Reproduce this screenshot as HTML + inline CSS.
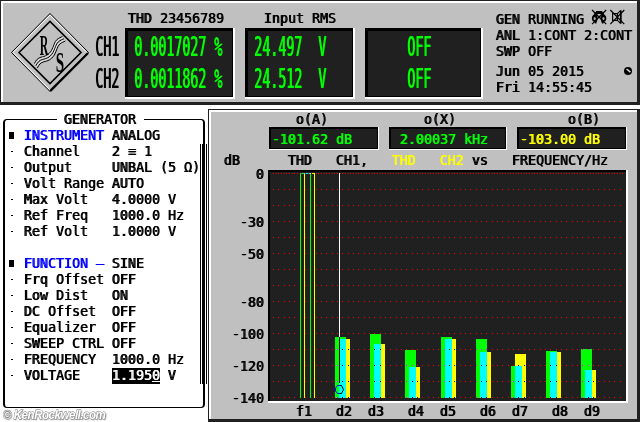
<!DOCTYPE html>
<html lang="en"><head><meta charset="utf-8"><title>UPL Audio Analyzer</title>
<style>
html,body{margin:0;padding:0;background:#fff;}
body{width:640px;height:422px;position:relative;overflow:hidden;}
div,span{box-sizing:border-box;}
.a{position:absolute;}
.t{position:absolute;white-space:pre;font-family:"DejaVu Sans Mono","Liberation Mono",monospace;font-weight:normal;font-size:13.3px;line-height:16px;height:16px;color:#000;letter-spacing:0;text-shadow:0.8px 0 0;margin-left:-0.4px;}
.b{color:#0000ff;}
.g{color:#00ff00;}
.y{color:#ffff00;}
.big{position:absolute;white-space:pre;font-family:"DejaVu Sans Mono","Liberation Mono",monospace;font-weight:normal;font-size:13.3px;line-height:16px;height:16px;color:#00ff00;transform-origin:0 0;transform:scaleY(2);text-shadow:0.8px 0 0;}
.bigk{color:#000;}
.thin{text-shadow:0.4px 0 0;}
.dash{position:absolute;width:2px;height:1px;background:#000;left:11px;}
.bul{position:absolute;width:5px;height:7px;background:#000;left:9px;}
</style></head><body>
<div id="screen" style="position:absolute;left:0;top:0;width:640px;height:422px;overflow:hidden;will-change:transform">

<!-- top status panel -->
<div class="a" style="left:0px;top:0px;width:640px;height:105px;background:#202020"></div>
<div class="a" style="left:1px;top:1px;width:636px;height:101px;background:#fff"></div>
<div class="a" style="left:3px;top:3px;width:634px;height:99px;background:#c0c0c0"></div>
<div class="a" style="left:125px;top:28px;width:110px;height:71px;background:#fff"></div>
<div class="a" style="left:125px;top:28px;width:108px;height:69px;background:#000"></div>
<div class="a" style="left:128px;top:31px;width:104px;height:65px;background:#202020"></div>
<div class="a" style="left:245px;top:28px;width:110px;height:71px;background:#fff"></div>
<div class="a" style="left:245px;top:28px;width:108px;height:69px;background:#000"></div>
<div class="a" style="left:248px;top:31px;width:104px;height:65px;background:#202020"></div>
<div class="a" style="left:365px;top:28px;width:118px;height:71px;background:#fff"></div>
<div class="a" style="left:365px;top:28px;width:116px;height:69px;background:#000"></div>
<div class="a" style="left:368px;top:31px;width:112px;height:65px;background:#202020"></div>
<div class="t" style="left:128px;top:11px;">THD 23456789</div>
<div class="t" style="left:264px;top:11px;">Input RMS</div>
<div class="t" style="left:496px;top:12px;">GEN RUNNING</div>
<div class="t" style="left:496px;top:28px;">ANL 1:CONT 2:CONT</div>
<div class="t" style="left:496px;top:44px;">SWP OFF</div>
<div class="t" style="left:496px;top:64px;">Jun 05 2015</div>
<div class="t" style="left:496px;top:80px;">Fri 14:55:45</div>
<div class="big bigk" style="left:95px;top:32px">CH1</div>
<div class="big bigk" style="left:95px;top:64px">CH2</div>
<div class="big " style="left:134px;top:32px">0.0017027 %</div>
<div class="big " style="left:134px;top:64px">0.0011862 %</div>
<div class="big " style="left:254px;top:32px">24.497  V</div>
<div class="big " style="left:254px;top:64px">24.512  V</div>
<div class="big " style="left:407px;top:32px">OFF</div>
<div class="big " style="left:407px;top:64px">OFF</div>
<svg class="a" style="left:5px;top:8px" width="90" height="90" viewBox="5 8 90 90">
<polygon points="11.5,52.5 50,13.5 88.5,52.5 50,91.5" fill="#c0c0c0" stroke="#000" stroke-width="1"/>
<polygon points="13,52.5 50,15 87,52.5 50,90" fill="none" stroke="#fff" stroke-width="1"/>
<polyline points="88,53 50.3,90.8" fill="none" stroke="#000" stroke-width="2.4"/>
<polygon points="19,52.5 50,21.5 81,52.5 50,83.5" fill="#c0c0c0" stroke="#000" stroke-width="1.6"/>
<g fill="none" stroke-width="1">
<path transform="translate(0.0,0.00)" d="M34.5,63.5 C36,60 38,58 41,57.2 C45,56.3 48,55.5 51.5,50.5 C54,46 54.5,41.5 57,39.5 C59,37.8 61,37.2 62.5,36.5" stroke="#000"/>
<path transform="translate(0.7,1.15)" d="M34.5,63.5 C36,60 38,58 41,57.2 C45,56.3 48,55.5 51.5,50.5 C54,46 54.5,41.5 57,39.5 C59,37.8 61,37.2 62.5,36.5" stroke="#e8e8e8"/>
<path transform="translate(1.4,2.30)" d="M34.5,63.5 C36,60 38,58 41,57.2 C45,56.3 48,55.5 51.5,50.5 C54,46 54.5,41.5 57,39.5 C59,37.8 61,37.2 62.5,36.5" stroke="#000"/>
<path transform="translate(2.1,3.45)" d="M34.5,63.5 C36,60 38,58 41,57.2 C45,56.3 48,55.5 51.5,50.5 C54,46 54.5,41.5 57,39.5 C59,37.8 61,37.2 62.5,36.5" stroke="#e8e8e8"/>
<path transform="translate(2.8,4.60)" d="M34.5,63.5 C36,60 38,58 41,57.2 C45,56.3 48,55.5 51.5,50.5 C54,46 54.5,41.5 57,39.5 C59,37.8 61,37.2 62.5,36.5" stroke="#000"/>
</g>
<text x="39.8" y="55.4" font-family="Liberation Serif,serif" font-weight="bold" font-size="30" textLength="8.6" lengthAdjust="spacingAndGlyphs" fill="#000">R</text>
<text x="55.8" y="72" font-family="Liberation Serif,serif" font-weight="bold" font-size="30" textLength="8.4" lengthAdjust="spacingAndGlyphs" fill="#000">S</text>
</svg>
<svg class="a" style="left:590px;top:8px" width="36" height="18" viewBox="590 8 36 18" fill="none" stroke="#000" stroke-width="1.2">
<g stroke="none" fill="#000"><rect x="596" y="11" width="6.2" height="1.2"/><rect x="594.5" y="12" width="9.2" height="2"/>
<polygon points="594.5,13.5 598,13.5 596.5,16 593,16"/><polygon points="603.7,13.5 600.2,13.5 601.7,16 605.2,16"/>
<ellipse cx="594.8" cy="18.2" rx="2.9" ry="3.5"/><ellipse cx="603.4" cy="18.2" rx="2.9" ry="3.5"/>
<polygon points="593.2,20.5 597.2,20.5 596.2,23.6 595,23.6"/><polygon points="605,20.5 601,20.5 602,23.6 603.2,23.6"/>
<ellipse cx="594.7" cy="18.5" rx="1.1" ry="1.6" fill="#a8a8a8"/><ellipse cx="603.5" cy="18.5" rx="1.1" ry="1.6" fill="#a8a8a8"/>
<circle cx="599.1" cy="17" r="1.2"/></g>
<path d="M592,10 L606.2,24.2 M606.2,10 L592,24.2"/>
<rect x="612.6" y="13.6" width="4.8" height="6.8"/>
<path d="M617.4,13.6 L620.6,10.6 M617.4,20.4 L620.6,23.4"/>
<path d="M620.8,10.4 L620.8,23.6" stroke-width="1.8"/>
<path d="M610.3,10 L624.3,24.2 M624.3,10 L610.3,24.2"/>
</svg>
<svg class="a" style="left:623px;top:66px" width="10" height="10" viewBox="623 66 10 10"><circle cx="628" cy="71" r="4" fill="#000"/><path d="M626.6,69 L630.4,72.2" stroke="#d8d8d8" stroke-width="1.6" fill="none"/></svg>
<!-- generator panel -->
<div class="a" style="left:3px;top:119px;width:202px;height:289px;border:solid #000;border-width:1px 2px;border-radius:4px"></div>
<div class="a" style="left:57px;top:118px;width:87px;height:4px;background:#fff"></div>
<div class="a" style="left:200px;top:144px;width:1px;height:240px;background:#000"></div>
<div class="a" style="left:202px;top:144px;width:3px;height:240px;background:#000"></div>
<div class="a" style="left:206px;top:144px;width:1px;height:240px;background:#000"></div>
<div class="t" style="left:64px;top:112px;">GENERATOR</div>
<div class="bul" style="top:132px"></div>
<div class="t b" style="left:24px;top:128px;">INSTRUMENT</div>
<div class="t" style="left:112px;top:128px;">ANALOG</div>
<div class="dash" style="top:151px"></div>
<div class="t" style="left:24px;top:144px;">Channel</div>
<div class="t" style="left:112px;top:144px;">2 ≡ 1</div>
<div class="dash" style="top:167px"></div>
<div class="t" style="left:24px;top:160px;">Output</div>
<div class="t" style="left:112px;top:160px;">UNBAL (5 Ω)</div>
<div class="dash" style="top:183px"></div>
<div class="t" style="left:24px;top:176px;">Volt Range</div>
<div class="t" style="left:112px;top:176px;">AUTO</div>
<div class="dash" style="top:199px"></div>
<div class="t" style="left:24px;top:192px;">Max Volt</div>
<div class="t" style="left:112px;top:192px;">4.0000 V</div>
<div class="dash" style="top:215px"></div>
<div class="t" style="left:24px;top:208px;">Ref Freq</div>
<div class="t" style="left:112px;top:208px;">1000.0 Hz</div>
<div class="dash" style="top:231px"></div>
<div class="t" style="left:24px;top:224px;">Ref Volt</div>
<div class="t" style="left:112px;top:224px;">1.0000 V</div>
<div class="bul" style="top:260px"></div>
<div class="t b" style="left:24px;top:256px;">FUNCTION –</div>
<div class="t" style="left:112px;top:256px;">SINE</div>
<div class="dash" style="top:279px"></div>
<div class="t" style="left:24px;top:272px;">Frq Offset</div>
<div class="t" style="left:112px;top:272px;">OFF</div>
<div class="dash" style="top:295px"></div>
<div class="t" style="left:24px;top:288px;">Low Dist</div>
<div class="t" style="left:112px;top:288px;">ON</div>
<div class="dash" style="top:311px"></div>
<div class="t" style="left:24px;top:304px;">DC Offset</div>
<div class="t" style="left:112px;top:304px;">OFF</div>
<div class="dash" style="top:327px"></div>
<div class="t" style="left:24px;top:320px;">Equalizer</div>
<div class="t" style="left:112px;top:320px;">OFF</div>
<div class="dash" style="top:343px"></div>
<div class="t" style="left:24px;top:336px;">SWEEP CTRL</div>
<div class="t" style="left:112px;top:336px;">OFF</div>
<div class="dash" style="top:359px"></div>
<div class="t" style="left:24px;top:352px;">FREQUENCY</div>
<div class="t" style="left:112px;top:352px;">1000.0 Hz</div>
<div class="dash" style="top:375px"></div>
<div class="t" style="left:24px;top:368px;">VOLTAGE</div>
<div class="a" style="left:112px;top:368px;width:48px;height:16px;background:#000"></div>
<div class="t" style="left:112px;top:368px;color:#fff">1.1950</div>
<div class="a" style="left:152px;top:381px;width:8px;height:1px;background:#fff"></div>
<div class="t" style="left:168px;top:368px;">V</div>
<div class="a" style="left:3px;top:407px;font:italic bold 13.5px/16px 'Liberation Sans',sans-serif;color:#fff;-webkit-text-stroke:0.9px #6c6c6c;paint-order:stroke fill;text-shadow:1px 1px 1.5px #888;letter-spacing:-0.6px;white-space:pre;transform-origin:0 0;transform:scaleX(0.86)">© KenRockwell.com</div>
<!-- graph panel -->
<div class="a" style="left:208px;top:109px;width:432px;height:313px;background:#202020"></div>
<div class="a" style="left:209px;top:110px;width:428px;height:309px;background:#fff"></div>
<div class="a" style="left:211px;top:112px;width:426px;height:307px;background:#c0c0c0"></div>
<div class="a" style="left:269px;top:127px;width:110px;height:23px;background:#fff"></div>
<div class="a" style="left:269px;top:127px;width:109px;height:22px;background:#000"></div>
<div class="a" style="left:271px;top:129px;width:106px;height:19px;background:#202020"></div>
<div class="a" style="left:389px;top:127px;width:118px;height:23px;background:#fff"></div>
<div class="a" style="left:389px;top:127px;width:117px;height:22px;background:#000"></div>
<div class="a" style="left:391px;top:129px;width:114px;height:19px;background:#202020"></div>
<div class="a" style="left:517px;top:127px;width:110px;height:23px;background:#fff"></div>
<div class="a" style="left:517px;top:127px;width:109px;height:22px;background:#000"></div>
<div class="a" style="left:519px;top:129px;width:106px;height:19px;background:#202020"></div>
<div class="t" style="left:296px;top:112px;">o(A)</div>
<div class="t" style="left:424px;top:112px;">o(X)</div>
<div class="t" style="left:568px;top:112px;">o(B)</div>
<div class="t g" style="left:272px;top:132px;">-101.62 dB</div>
<div class="t g" style="left:400px;top:132px;">2.00037 kHz</div>
<div class="t y" style="left:520px;top:132px;">-103.00 dB</div>
<div class="t" style="left:224px;top:153px;">dB</div>
<div class="t" style="left:288px;top:153px;">THD</div>
<div class="t" style="left:336px;top:153px;">CH1,</div>
<div class="t y thin" style="left:392px;top:153px;">THD</div>
<div class="t y thin" style="left:440px;top:153px;">CH2</div>
<div class="t" style="left:472px;top:153px;">vs</div>
<div class="t" style="left:512px;top:153px;">FREQUENCY/Hz</div>
<div class="t" style="left:256px;top:167px;">0</div>
<div class="t" style="left:240px;top:215px;">-30</div>
<div class="t" style="left:240px;top:247px;">-50</div>
<div class="t" style="left:240px;top:295px;">-80</div>
<div class="t" style="left:232px;top:327px;">-100</div>
<div class="t" style="left:232px;top:359px;">-120</div>
<div class="t" style="left:232px;top:391px;">-140</div>
<div class="t" style="left:296px;top:404px;">f1</div>
<div class="t" style="left:336px;top:404px;">d2</div>
<div class="t" style="left:368px;top:404px;">d3</div>
<div class="t" style="left:408px;top:404px;">d4</div>
<div class="t" style="left:440px;top:404px;">d5</div>
<div class="t" style="left:480px;top:404px;">d6</div>
<div class="t" style="left:512px;top:404px;">d7</div>
<div class="t" style="left:552px;top:404px;">d8</div>
<div class="t" style="left:584px;top:404px;">d9</div>
<svg class="a" style="left:268px;top:170px" width="360" height="233" viewBox="268 170 360 233" shape-rendering="crispEdges">
<rect x="268" y="170" width="360" height="233" fill="#fff"/>
<rect x="268" y="170" width="358" height="231" fill="#000"/>
<rect x="270" y="172" width="356" height="229" fill="#202020"/>
<g stroke="#ff0000" stroke-width="1" fill="none">
<line x1="273" y1="173.5" x2="624" y2="173.5" stroke-dasharray="1 1.6667"/>
<line x1="273" y1="189.5" x2="624" y2="189.5" stroke-dasharray="1 4.3333"/>
<line x1="273" y1="205.5" x2="624" y2="205.5" stroke-dasharray="1 4.3333"/>
<line x1="273" y1="221.5" x2="624" y2="221.5" stroke-dasharray="1 4.3333"/>
<line x1="273" y1="237.5" x2="624" y2="237.5" stroke-dasharray="1 4.3333"/>
<line x1="273" y1="253.5" x2="624" y2="253.5" stroke-dasharray="1 4.3333"/>
<line x1="273" y1="269.5" x2="624" y2="269.5" stroke-dasharray="1 4.3333"/>
<line x1="273" y1="285.5" x2="624" y2="285.5" stroke-dasharray="1 4.3333"/>
<line x1="273" y1="301.5" x2="624" y2="301.5" stroke-dasharray="1 4.3333"/>
<line x1="273" y1="317.5" x2="624" y2="317.5" stroke-dasharray="1 4.3333"/>
<line x1="273" y1="333.5" x2="624" y2="333.5" stroke-dasharray="1 4.3333"/>
<line x1="273" y1="349.5" x2="624" y2="349.5" stroke-dasharray="1 4.3333"/>
<line x1="273" y1="365.5" x2="624" y2="365.5" stroke-dasharray="1 4.3333"/>
<line x1="273" y1="381.5" x2="624" y2="381.5" stroke-dasharray="1 4.3333"/>
<line x1="273" y1="397.5" x2="624" y2="397.5" stroke-dasharray="1 4.3333"/>
</g>
<rect x="300" y="173" width="1" height="225" fill="#00ff00"/>
<rect x="304" y="173" width="1" height="225" fill="#ffff00"/>
<rect x="310" y="173" width="1" height="225" fill="#00ff00"/>
<rect x="314" y="173" width="1" height="225" fill="#ffff00"/>
<rect x="300" y="173" width="4" height="1" fill="#00ff00"/>
<rect x="301" y="173" width="1" height="1" fill="#ff00ff"/>
<rect x="304" y="173" width="1" height="1" fill="#00ffff"/>
<rect x="306" y="173" width="2" height="1" fill="#00ffff"/>
<rect x="309" y="173" width="1" height="1" fill="#00ffff"/>
<rect x="310" y="173" width="5" height="1" fill="#ffff00"/>
<rect x="311" y="173" width="1" height="1" fill="#0000ff"/>
<rect x="335" y="337" width="11" height="61" fill="#00ff00"/>
<rect x="339" y="339" width="11" height="59" fill="#ffff00"/>
<rect x="339" y="339" width="7" height="59" fill="#00ffff"/>
<rect x="370" y="334" width="11" height="64" fill="#00ff00"/>
<rect x="374" y="344" width="11" height="54" fill="#ffff00"/>
<rect x="374" y="344" width="7" height="54" fill="#00ffff"/>
<rect x="405" y="350" width="11" height="48" fill="#00ff00"/>
<rect x="409" y="367" width="11" height="31" fill="#ffff00"/>
<rect x="409" y="367" width="7" height="31" fill="#00ffff"/>
<rect x="441" y="337" width="11" height="61" fill="#00ff00"/>
<rect x="445" y="339" width="11" height="59" fill="#ffff00"/>
<rect x="445" y="339" width="7" height="59" fill="#00ffff"/>
<rect x="476" y="339" width="11" height="59" fill="#00ff00"/>
<rect x="480" y="352" width="11" height="46" fill="#ffff00"/>
<rect x="480" y="352" width="7" height="46" fill="#00ffff"/>
<rect x="511" y="366" width="11" height="32" fill="#00ff00"/>
<rect x="515" y="354" width="11" height="44" fill="#ffff00"/>
<rect x="515" y="366" width="7" height="32" fill="#00ffff"/>
<rect x="546" y="351" width="11" height="47" fill="#00ff00"/>
<rect x="550" y="352" width="11" height="46" fill="#ffff00"/>
<rect x="550" y="352" width="7" height="46" fill="#00ffff"/>
<rect x="581" y="349" width="11" height="49" fill="#00ff00"/>
<rect x="585" y="370" width="11" height="28" fill="#ffff00"/>
<rect x="585" y="370" width="7" height="28" fill="#00ffff"/>
<rect x="337" y="349" width="1" height="1" fill="#ff00ff"/>
<rect x="342" y="349" width="1" height="1" fill="#000"/>
<rect x="348" y="349" width="1" height="1" fill="#0000ff"/>
<rect x="337" y="365" width="1" height="1" fill="#ff00ff"/>
<rect x="342" y="365" width="1" height="1" fill="#000"/>
<rect x="348" y="365" width="1" height="1" fill="#0000ff"/>
<rect x="337" y="381" width="1" height="1" fill="#ff00ff"/>
<rect x="342" y="381" width="1" height="1" fill="#000"/>
<rect x="348" y="381" width="1" height="1" fill="#0000ff"/>
<rect x="337" y="397" width="1" height="1" fill="#ff00ff"/>
<rect x="342" y="397" width="1" height="1" fill="#000"/>
<rect x="348" y="397" width="1" height="1" fill="#0000ff"/>
<rect x="374" y="349" width="1" height="1" fill="#000"/>
<rect x="380" y="349" width="1" height="1" fill="#000"/>
<rect x="374" y="365" width="1" height="1" fill="#000"/>
<rect x="380" y="365" width="1" height="1" fill="#000"/>
<rect x="374" y="381" width="1" height="1" fill="#000"/>
<rect x="380" y="381" width="1" height="1" fill="#000"/>
<rect x="374" y="397" width="1" height="1" fill="#000"/>
<rect x="380" y="397" width="1" height="1" fill="#000"/>
<rect x="406" y="365" width="1" height="1" fill="#ff00ff"/>
<rect x="412" y="365" width="1" height="1" fill="#ff00ff"/>
<rect x="406" y="381" width="1" height="1" fill="#ff00ff"/>
<rect x="412" y="381" width="1" height="1" fill="#000"/>
<rect x="417" y="381" width="1" height="1" fill="#0000ff"/>
<rect x="406" y="397" width="1" height="1" fill="#ff00ff"/>
<rect x="412" y="397" width="1" height="1" fill="#000"/>
<rect x="417" y="397" width="1" height="1" fill="#0000ff"/>
<rect x="444" y="349" width="1" height="1" fill="#ff00ff"/>
<rect x="449" y="349" width="1" height="1" fill="#000"/>
<rect x="454" y="349" width="1" height="1" fill="#0000ff"/>
<rect x="444" y="365" width="1" height="1" fill="#ff00ff"/>
<rect x="449" y="365" width="1" height="1" fill="#000"/>
<rect x="454" y="365" width="1" height="1" fill="#0000ff"/>
<rect x="444" y="381" width="1" height="1" fill="#ff00ff"/>
<rect x="449" y="381" width="1" height="1" fill="#000"/>
<rect x="454" y="381" width="1" height="1" fill="#0000ff"/>
<rect x="444" y="397" width="1" height="1" fill="#ff00ff"/>
<rect x="449" y="397" width="1" height="1" fill="#000"/>
<rect x="454" y="397" width="1" height="1" fill="#0000ff"/>
<rect x="476" y="349" width="1" height="1" fill="#ff00ff"/>
<rect x="481" y="349" width="1" height="1" fill="#ff00ff"/>
<rect x="486" y="349" width="1" height="1" fill="#ff00ff"/>
<rect x="476" y="365" width="1" height="1" fill="#ff00ff"/>
<rect x="481" y="365" width="1" height="1" fill="#000"/>
<rect x="486" y="365" width="1" height="1" fill="#000"/>
<rect x="476" y="381" width="1" height="1" fill="#ff00ff"/>
<rect x="481" y="381" width="1" height="1" fill="#000"/>
<rect x="486" y="381" width="1" height="1" fill="#000"/>
<rect x="476" y="397" width="1" height="1" fill="#ff00ff"/>
<rect x="481" y="397" width="1" height="1" fill="#000"/>
<rect x="486" y="397" width="1" height="1" fill="#000"/>
<rect x="518" y="365" width="1" height="1" fill="#0000ff"/>
<rect x="524" y="365" width="1" height="1" fill="#0000ff"/>
<rect x="513" y="381" width="1" height="1" fill="#ff00ff"/>
<rect x="518" y="381" width="1" height="1" fill="#000"/>
<rect x="524" y="381" width="1" height="1" fill="#0000ff"/>
<rect x="513" y="397" width="1" height="1" fill="#ff00ff"/>
<rect x="518" y="397" width="1" height="1" fill="#000"/>
<rect x="524" y="397" width="1" height="1" fill="#0000ff"/>
<rect x="550" y="365" width="1" height="1" fill="#000"/>
<rect x="556" y="365" width="1" height="1" fill="#000"/>
<rect x="550" y="381" width="1" height="1" fill="#000"/>
<rect x="556" y="381" width="1" height="1" fill="#000"/>
<rect x="550" y="397" width="1" height="1" fill="#000"/>
<rect x="556" y="397" width="1" height="1" fill="#000"/>
<rect x="582" y="349" width="1" height="1" fill="#ff00ff"/>
<rect x="588" y="349" width="1" height="1" fill="#ff00ff"/>
<rect x="582" y="365" width="1" height="1" fill="#ff00ff"/>
<rect x="588" y="365" width="1" height="1" fill="#ff00ff"/>
<rect x="582" y="381" width="1" height="1" fill="#ff00ff"/>
<rect x="588" y="381" width="1" height="1" fill="#000"/>
<rect x="593" y="381" width="1" height="1" fill="#0000ff"/>
<rect x="582" y="397" width="1" height="1" fill="#ff00ff"/>
<rect x="588" y="397" width="1" height="1" fill="#000"/>
<rect x="593" y="397" width="1" height="1" fill="#0000ff"/>
<rect x="339" y="173" width="1" height="164" fill="#fff"/>
<rect x="339" y="337" width="1" height="46" fill="#000"/>
<path d="M339.5,385.5 L337.5,385.5 L335.5,388 L335.5,391 L337.5,393.5 L339.5,393.5" fill="none" stroke="#0000ff" stroke-width="1" shape-rendering="auto"/>
<path d="M339.5,385.5 L341.5,385.5 L343.5,389.5 L341.5,393.5 L339.5,393.5" fill="none" stroke="#000" stroke-width="1" shape-rendering="auto"/>
</svg>
</div>
</body></html>
